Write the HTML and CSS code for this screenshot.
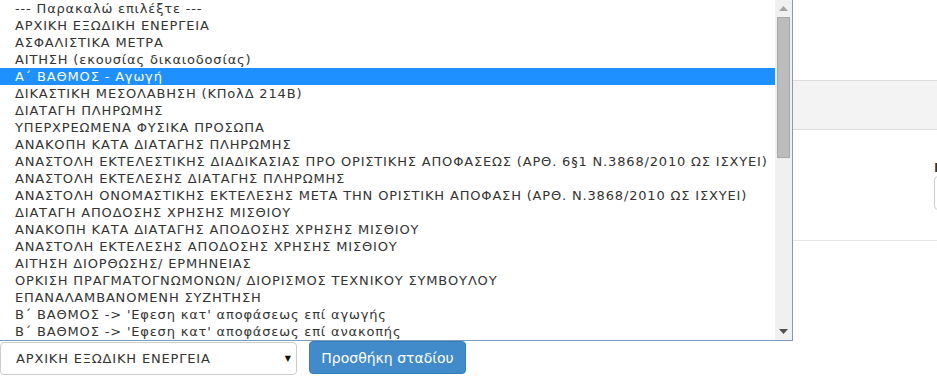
FILE: index.html
```html
<!DOCTYPE html>
<html lang="el">
<head>
<meta charset="utf-8">
<title>Στάδια</title>
<link rel="stylesheet" href="styles.css">
</head>
<body>
<div class="page">
  <div class="topbar"></div>
  <div class="band"></div>
  <div class="panel">
    <div class="field">
      <label class="field-label">Ημερομηνία</label>
      <div class="field-input"></div>
    </div>
  </div>
  <div class="divider"></div>
  <div class="form-row">
    <div class="select-control">
      <span class="select-value">ΑΡΧΙΚΗ ΕΞΩΔΙΚΗ ΕΝΕΡΓΕΙΑ</span>
      <span class="select-arrow">▼</span>
    </div>
    <button class="btn-primary" type="button">Προσθήκη σταδίου</button>
  </div>
</div>

<div class="dropdown">
  <ul class="options">
    <li class="option">--- Παρακαλώ επιλέξτε ---</li>
    <li class="option">ΑΡΧΙΚΗ ΕΞΩΔΙΚΗ ΕΝΕΡΓΕΙΑ</li>
    <li class="option">ΑΣΦΑΛΙΣΤΙΚΑ ΜΕΤΡΑ</li>
    <li class="option">ΑΙΤΗΣΗ (εκουσίας δικαιοδοσίας)</li>
    <li class="option selected">Α΄ ΒΑΘΜΟΣ - Αγωγή</li>
    <li class="option">ΔΙΚΑΣΤΙΚΗ ΜΕΣΟΛΑΒΗΣΗ (ΚΠολΔ 214Β)</li>
    <li class="option">ΔΙΑΤΑΓΗ ΠΛΗΡΩΜΗΣ</li>
    <li class="option">ΥΠΕΡΧΡΕΩΜΕΝΑ ΦΥΣΙΚΑ ΠΡΟΣΩΠΑ</li>
    <li class="option">ΑΝΑΚΟΠΗ ΚΑΤΑ ΔΙΑΤΑΓΗΣ ΠΛΗΡΩΜΗΣ</li>
    <li class="option">ΑΝΑΣΤΟΛΗ ΕΚΤΕΛΕΣΤΙΚΗΣ ΔΙΑΔΙΚΑΣΙΑΣ ΠΡΟ ΟΡΙΣΤΙΚΗΣ ΑΠΟΦΑΣΕΩΣ (ΑΡΘ. 6§1 Ν.3868/2010 ΩΣ ΙΣΧΥΕΙ)</li>
    <li class="option">ΑΝΑΣΤΟΛΗ ΕΚΤΕΛΕΣΗΣ ΔΙΑΤΑΓΗΣ ΠΛΗΡΩΜΗΣ</li>
    <li class="option">ΑΝΑΣΤΟΛΗ ΟΝΟΜΑΣΤΙΚΗΣ ΕΚΤΕΛΕΣΗΣ ΜΕΤΑ ΤΗΝ ΟΡΙΣΤΙΚΗ ΑΠΟΦΑΣΗ (ΑΡΘ. Ν.3868/2010 ΩΣ ΙΣΧΥΕΙ)</li>
    <li class="option">ΔΙΑΤΑΓΗ ΑΠΟΔΟΣΗΣ ΧΡΗΣΗΣ ΜΙΣΘΙΟΥ</li>
    <li class="option">ΑΝΑΚΟΠΗ ΚΑΤΑ ΔΙΑΤΑΓΗΣ ΑΠΟΔΟΣΗΣ ΧΡΗΣΗΣ ΜΙΣΘΙΟΥ</li>
    <li class="option">ΑΝΑΣΤΟΛΗ ΕΚΤΕΛΕΣΗΣ ΑΠΟΔΟΣΗΣ ΧΡΗΣΗΣ ΜΙΣΘΙΟΥ</li>
    <li class="option">ΑΙΤΗΣΗ ΔΙΟΡΘΩΣΗΣ/ ΕΡΜΗΝΕΙΑΣ</li>
    <li class="option">ΟΡΚΙΣΗ ΠΡΑΓΜΑΤΟΓΝΩΜΟΝΩΝ/ ΔΙΟΡΙΣΜΟΣ ΤΕΧΝΙΚΟΥ ΣΥΜΒΟΥΛΟΥ</li>
    <li class="option">ΕΠΑΝΑΛΑΜΒΑΝΟΜΕΝΗ ΣΥΖΗΤΗΣΗ</li>
    <li class="option">Β΄ ΒΑΘΜΟΣ -&gt; 'Εφεση κατ' αποφάσεως επί αγωγής</li>
    <li class="option">Β΄ ΒΑΘΜΟΣ -&gt; 'Εφεση κατ' αποφάσεως επί ανακοπής</li>
  </ul>
  <div class="scrollbar">
    <div class="scroll-btn">
      <svg width="9" height="5" viewBox="0 0 9 5"><polygon points="0,5 9,5 4.5,0" fill="#a3a3a3"/></svg>
    </div>
    <div class="scroll-track">
      <div class="scroll-thumb"></div>
    </div>
    <div class="scroll-btn">
      <svg width="9" height="5" viewBox="0 0 9 5"><polygon points="0,0 9,0 4.5,5" fill="#505050"/></svg>
    </div>
  </div>
</div>
</body>
</html>
```

FILE: styles.css
```css
html, body {
  margin: 0;
  padding: 0;
  background: #fff;
  width: 937px;
  height: 376px;
  overflow: hidden;
}

body {
  position: relative;
  font-family: "DejaVu Sans", Verdana, sans-serif;
  font-size: 13px;
  color: #333;
}

.page {
  width: 937px;
}

.topbar {
  height: 80px;
}

.band {
  height: 48px;
  background: #f3f3f3;
  border-top: 1px solid #dddddd;
  border-bottom: 1px solid #dddddd;
}

.panel {
  height: 110px;
  padding-left: 934px;
  overflow: hidden;
  box-sizing: border-box;
  padding-top: 30px;
}

.field {
  width: 200px;
}

.field-label {
  display: block;
  font-weight: bold;
  font-size: 13px;
  line-height: 16px;
  color: #333;
}

.field-input {
  border: 1px solid #cccccc;
  border-radius: 4px;
  box-sizing: border-box;
  height: 34px;
}

.divider {
  height: 0;
  border-top: 1px solid #e5e5e5;
}

.form-row {
  margin-top: 100px;
  display: flex;
  align-items: flex-start;
  gap: 12px;
}

.select-control {
  margin-top: 1px;
  width: 297px;
  height: 33px;
  box-sizing: border-box;
  border: 1px solid #cccccc;
  border-radius: 4px;
  display: flex;
  align-items: center;
  justify-content: space-between;
  padding: 0 5px 0 15px;
  color: #333;
}

.select-value {
  letter-spacing: 0.83px;
}

.select-arrow {
  font-size: 8px;
  color: #111;
}

.btn-primary {
  height: 33px;
  width: 157px;
  box-sizing: border-box;
  border: 1px solid #357ebd;
  border-radius: 4px;
  background: #428bca;
  color: #fff;
  font-family: "DejaVu Sans", Verdana, sans-serif;
  font-size: 14px;
  padding: 0;
}

.dropdown {
  position: absolute;
  left: 0;
  top: 0;
  width: 793px;
  height: 341px;
  box-sizing: border-box;
  background: #fff;
  border-right: 1px solid #7a9cbf;
  border-bottom: 1px solid #7a9cbf;
  display: flex;
}

.options {
  list-style: none;
  margin: 0;
  padding: 0;
  flex: 1;
  overflow: hidden;
}

.option {
  height: 17px;
  line-height: 17px;
  padding-left: 15px;
  white-space: nowrap;
  color: #333;
  letter-spacing: 0.83px;
}

.option.selected {
  background: #1e90ff;
  color: #fff;
}

.scrollbar {
  width: 17px;
  background: #f0f0f0;
  display: flex;
  flex-direction: column;
}

.scroll-btn {
  height: 17px;
  display: flex;
  align-items: center;
  justify-content: center;
}

.scroll-track {
  flex: 1;
}

.scroll-thumb {
  margin-left: 2px;
  width: 13px;
  height: 141px;
  box-sizing: border-box;
  background: #bcbcbc;
  border: 1px solid #a8a8a8;
}
```
